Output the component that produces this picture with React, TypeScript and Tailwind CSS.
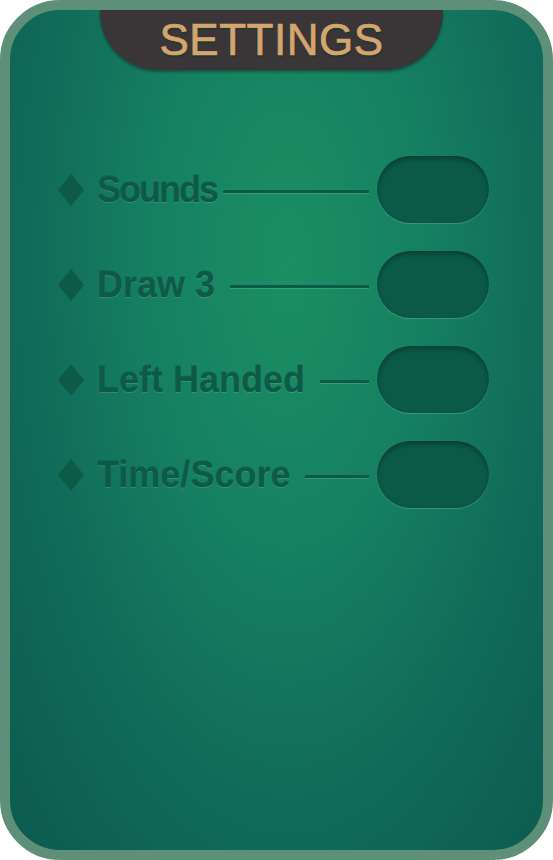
import React from "react";

const options = [
  { label: "Sounds", tight: true },
  { label: "Draw 3", tight: false },
  { label: "Left Handed", tight: false },
  { label: "Time/Score", tight: false },
];

function Diamond() {
  return (
    <svg width="26" height="32" viewBox="0 0 26 32" className="shrink-0">
      <polygon points="13,0 26,16 13,32 0,16" fill="#0d5a47" />
    </svg>
  );
}

function OptionRow({ label, tight }: { label: string; tight: boolean }) {
  return (
    <div className="flex items-center h-[67px]">
      <Diamond />
      <span
        className={`ml-[13px] text-[36px] font-bold text-[#0d5a47] leading-none whitespace-nowrap [text-shadow:0_1px_0_rgba(255,255,255,0.14),0_-1px_0_rgba(0,0,0,0.12)] ${tight ? "tracking-[-2px]" : "tracking-normal"}`}
        style={{ fontFamily: '"Liberation Sans", Arial, sans-serif' }}
      >
        {label}
      </span>
      <div
        className={`flex-1 h-[3px] mr-2 mt-1 bg-[#0d5a47] shadow-[0_1px_0_rgba(255,255,255,0.15)] ${tight ? "ml-[6px]" : "ml-[15px]"}`}
      />
      <div className="w-[112px] h-[67px] shrink-0 rounded-full bg-[#0b5a48] shadow-[inset_0_3px_5px_rgba(0,0,0,0.3),0_1px_1px_rgba(255,255,255,0.18)]" />
    </div>
  );
}

export default function App() {
  return (
    <div className="w-[553px] h-[860px] bg-white">
      <div className="h-[860px] rounded-[60px] border-[10px] border-[#5e8f79] overflow-hidden bg-[radial-gradient(ellipse_at_52%_30%,#1b8f63_0%,#168061_35%,#116b5a_65%,#0c5a4f_100%)] flex flex-col">
        <div className="ml-[90px] w-[343px] h-[60px] rounded-b-[58px] bg-[#3a3536] shadow-[0_2px_3px_rgba(0,0,0,0.35)] flex items-center justify-center">
          <span
            className="text-[44px] leading-none text-[#d4a56f] tracking-[0.5px] [-webkit-text-stroke:0.7px_#d4a56f] [text-shadow:1px_2px_1px_#1c3a2d]"
            style={{ fontFamily: '"Liberation Sans", Arial, sans-serif' }}
          >
            SETTINGS
          </span>
        </div>
        <div className="mt-[86px] pl-[48px] pr-[54px] flex flex-col gap-[28px]">
          {options.map((o) => (
            <OptionRow key={o.label} label={o.label} tight={o.tight} />
          ))}
        </div>
      </div>
    </div>
  );
}
